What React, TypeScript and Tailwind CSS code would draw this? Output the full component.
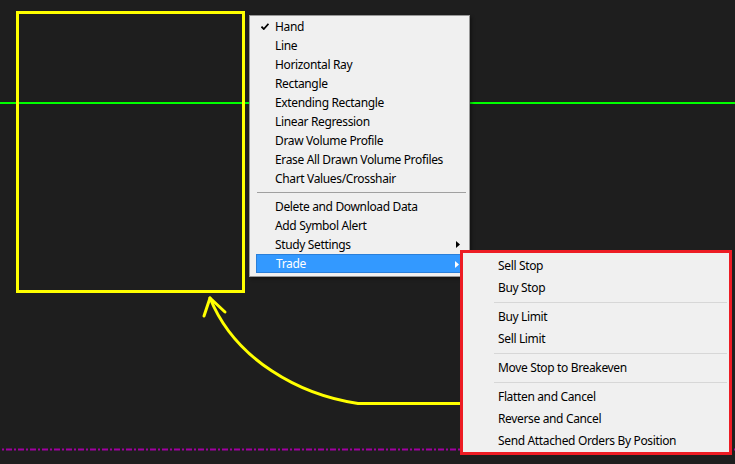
import React from 'react';

type Entry = { label: string; checked?: boolean; sub?: boolean; active?: boolean } | 'sep';

const mainMenu: Entry[] = [
  { label: 'Hand', checked: true },
  { label: 'Line' },
  { label: 'Horizontal Ray' },
  { label: 'Rectangle' },
  { label: 'Extending Rectangle' },
  { label: 'Linear Regression' },
  { label: 'Draw Volume Profile' },
  { label: 'Erase All Drawn Volume Profiles' },
  { label: 'Chart Values/Crosshair' },
  'sep',
  { label: 'Delete and Download Data' },
  { label: 'Add Symbol Alert' },
  { label: 'Study Settings', sub: true },
  { label: 'Trade', sub: true, active: true },
];

const tradeMenu: Entry[] = [
  { label: 'Sell Stop' },
  { label: 'Buy Stop' },
  'sep',
  { label: 'Buy Limit' },
  { label: 'Sell Limit' },
  'sep',
  { label: 'Move Stop to Breakeven' },
  'sep',
  { label: 'Flatten and Cancel' },
  { label: 'Reverse and Cancel' },
  { label: 'Send Attached Orders By Position' },
];

const Check = () => (
  <svg width="8" height="7" viewBox="0 0 8 7" className="absolute left-[5px] top-[6px]">
    <path d="M0.5 3.6 L2.8 6 L7.5 0.8" stroke="#000" strokeWidth="1.8" fill="none" />
  </svg>
);

const Caret = ({ white }: { white?: boolean }) => (
  <svg width="4" height="7" viewBox="0 0 4 7" className="absolute right-[6px] top-[6px]">
    <path d="M0 0 L4 3.5 L0 7 Z" fill={white ? '#fff' : '#000'} />
  </svg>
);

const MainMenu = () => (
  <div className="absolute left-[249px] top-[15px] w-[221px] border border-[#979797] bg-[#f0f0f0] pt-px pb-[3px] shadow-[2px_2px_3px_rgba(0,0,0,0.35)]">
    {mainMenu.map((e, i) =>
      e === 'sep' ? (
        <div key={i} className="flex h-[9px] items-center pl-[7px] pr-[3px]">
          <div className="h-px w-full bg-[#a0a0a0]" />
        </div>
      ) : (
        <div key={i} className="h-[19px] pl-[6px] pr-[3px]">
          <div
            className={
              'relative flex h-full items-center pl-[19px] ' +
              (e.active ? 'border border-[#2a7fd9] bg-[#3399ff] pl-[18px] text-white' : 'text-black')
            }
          >
            {e.checked && <Check />}
            <span className="leading-none">{e.label}</span>
            {e.sub && <Caret white={e.active} />}
          </div>
        </div>
      )
    )}
  </div>
);

const TradeMenu = () => (
  <div className="absolute left-[460px] top-[250px] w-[272px] border-[3px] border-[#ed1c24] bg-[#f0f0f0] pt-[2px]">
    {tradeMenu.map((e, i) =>
      e === 'sep' ? (
        <div key={i} className="flex h-[7px] items-center pl-[31px] pr-[2px]">
          <div className="h-px w-full bg-[#d7d7d7]" />
        </div>
      ) : (
        <div key={i} className="flex h-[22px] items-center pl-[35px] text-black">
          <span className="leading-none">{e.label}</span>
        </div>
      )
    )}
  </div>
);

export default function App() {
  return (
    <div
      className="relative h-[464px] w-[735px] overflow-hidden bg-[#1e1e1e] text-[12px] tracking-[-0.35px]"
      style={{ fontFamily: '"Noto Sans", "Open Sans", sans-serif' }}
    >
      {/* chart lines */}
      <div className="absolute left-0 top-[102px] h-[2px] w-full bg-[#00ff00]" />
      <svg className="absolute left-0 top-[448px]" width="735" height="3">
        <line x1="2" y1="1.5" x2="735" y2="1.5" stroke="#a000a0" strokeWidth="2" strokeDasharray="2 2 6 2" />
      </svg>

      {/* annotations */}
      <div className="absolute left-[16px] top-[11px] h-[282px] w-[229px] border-[3px] border-[#ffff00]" />
      <svg className="absolute left-0 top-0" width="735" height="464">
        <path
          d="M460 403.5 L358 403.5 C300 395 235 360 210 298"
          stroke="#ffff00"
          strokeWidth="3"
          fill="none"
          strokeLinecap="round"
        />
        <path d="M204 316 L210 298 L225 312" stroke="#ffff00" strokeWidth="3" fill="none" strokeLinecap="round" strokeLinejoin="round" />
      </svg>

      <MainMenu />
      <TradeMenu />
    </div>
  );
}
